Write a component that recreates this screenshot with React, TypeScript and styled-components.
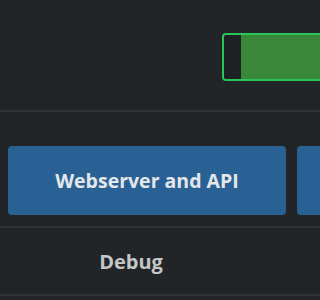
import React from "react"
import styled, { createGlobalStyle } from "styled-components"

const GlobalStyle = createGlobalStyle`
  html, body {
    margin: 0;
    padding: 0;
    background: #222527;
    overflow: hidden;
  }
  body {
    font-family: "Open Sans", "Liberation Sans", sans-serif;
  }
`

const Page = styled.div`
  width: 100%;
  height: 300px;
  overflow: hidden;
  background: #222527;
`

const Section = styled.div<{ height: number }>`
  height: ${(p) => p.height}px;
  border-bottom: 2px solid #303437;
  box-sizing: border-box;
  display: flex;
  overflow: hidden;
`

const ToggleRow = styled(Section)`
  padding-top: 33px;
  padding-left: 222px;
`

const Toggle = styled.div<{ on: boolean }>`
  flex: none;
  width: 110px;
  height: 48px;
  box-sizing: border-box;
  border: 2px solid #27c55a;
  border-radius: 4px;
  background: ${(p) => (p.on ? "#3b873a" : "#1e2123")};
  display: flex;
  overflow: hidden;
`

const Knob = styled.div`
  width: 17px;
  height: 100%;
  background: #1e2123;
`

const ButtonGrid = styled(Section)`
  display: grid;
  grid-template-columns: 278px 278px;
  column-gap: 11px;
  padding: 34px 8px 11px;
`

const ActionButton = styled.button`
  height: 69px;
  border: none;
  border-radius: 4px;
  background: #2a6195;
  color: #e4e7ea;
  font-family: "Open Sans", "Liberation Sans", sans-serif;
  font-size: 19.5px;
  font-weight: 700;
  padding: 0;
`

const HeadingRow = styled(Section)`
  align-items: center;
`

const HeadingLabel = styled.div`
  flex: none;
  width: 300px;
  padding-right: 38px;
  box-sizing: border-box;
  text-align: center;
  color: #c4c6c7;
  font-size: 20px;
  font-weight: 700;
`

export default function App() {
  return (
    <Page>
      <GlobalStyle />
      <ToggleRow height={112}>
        <Toggle on>
          <Knob />
        </Toggle>
      </ToggleRow>
      <ButtonGrid height={116}>
        <ActionButton>Webserver and API</ActionButton>
        <ActionButton aria-label="More" />
      </ButtonGrid>
      <HeadingRow height={68}>
        <HeadingLabel>Debug</HeadingLabel>
      </HeadingRow>
    </Page>
  )
}
